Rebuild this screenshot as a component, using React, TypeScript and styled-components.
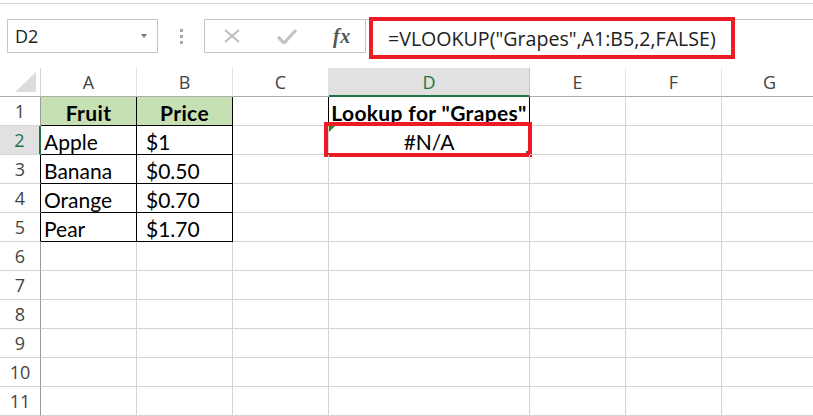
import React from "react";
import styled, { createGlobalStyle, css } from "styled-components";

const GlobalStyle = createGlobalStyle`
  html, body { margin: 0; padding: 0; background: #ffffff; }
  body { overflow: hidden; }
  * { box-sizing: border-box; }
`;

const UI_FONT = `"Open Sans", "Noto Sans", "DejaVu Sans", sans-serif`;
const CELL_FONT = `Lato, "Open Sans", "Liberation Sans", sans-serif`;
const GREEN = "#217346";
const GRID = "#d4d4d4";
const RED = "#ed1c24";

const Page = styled.div`
  width: 813px;
  height: 416px;
  overflow: hidden;
  background: #fff;
`;

const TopRule = styled.div`
  height: 4px;
  border-bottom: 1px solid ${GRID};
`;

const FormulaBar = styled.div`
  margin-top: 15px;
  height: 34px;
  display: flex;
  padding-left: 7px;
  font-family: ${UI_FONT};
`;

const NameBox = styled.div`
  width: 151px;
  height: 34px;
  border: 1px solid #c6c6c6;
  display: flex;
  align-items: center;
  justify-content: space-between;
  padding: 0 10px 0 7px;
  font-size: 18px;
  color: #222;
`;

const Caret = styled.span`
  width: 0;
  height: 0;
  border-left: 3.5px solid transparent;
  border-right: 3.5px solid transparent;
  border-top: 4px solid #777;
`;

const Grip = styled.div`
  width: 46px;
  display: flex;
  flex-direction: column;
  align-items: center;
  justify-content: center;
  gap: 3px;
`;

const GripDot = styled.span`
  width: 3px;
  height: 3px;
  background: #a6a6a6;
`;

const FxBox = styled.div`
  width: 162px;
  height: 34px;
  border: 1px solid #c6c6c6;
  display: flex;
  align-items: center;
  padding: 0 0 0 18px;
  gap: 36px;
`;

const FxLabel = styled.span`
  font-family: "Liberation Serif", "DejaVu Serif", serif;
  font-style: italic;
  font-weight: bold;
  font-size: 20px;
  color: #555;
  letter-spacing: 0.5px;
`;

const FormulaInput = styled.div`
  flex: 1;
  height: 34px;
  border-top: 1px solid #c6c6c6;
  display: flex;
  align-items: flex-start;
`;

const FormulaHighlight = styled.div`
  margin-top: -3px;
  margin-left: 3px;
  width: 366px;
  height: 42px;
  border: 4px solid ${RED};
  background: #fff;
  display: flex;
  align-items: center;
  padding-left: 15px;
  font-size: 19.6px;
  color: #222;
  white-space: nowrap;
`;

const Sheet = styled.div`
  margin-top: 15px;
  display: grid;
  grid-template-columns: 41px 96px 96px 96px 201px 96px 96px 96px;
  grid-template-rows: 29px;
  grid-auto-rows: 29px;
`;

const Corner = styled.div`
  border-right: 1px solid ${GRID};
  border-bottom: 1px solid #ababab;
  display: flex;
  align-items: flex-end;
  justify-content: flex-end;
  padding: 0 4px 4px 0;
`;

const ColHead = styled.div<{ $active?: boolean }>`
  font-family: ${UI_FONT};
  font-size: 18px;
  color: #444;
  display: flex;
  align-items: center;
  justify-content: center;
  border-right: 1px solid #e1e1e1;
  border-bottom: 1px solid #ababab;
  ${(p) =>
    p.$active &&
    css`
      background: #e1e1e1;
      color: ${GREEN};
      border-right-color: #c6c6c6;
      border-bottom: 2px solid ${GREEN};
      padding-top: 1px;
    `}
`;

const RowHead = styled.div<{ $edge?: "active" | "boxed" }>`
  font-family: ${UI_FONT};
  font-size: 18px;
  color: #444;
  display: flex;
  align-items: center;
  justify-content: center;
  border-bottom: 1px solid ${GRID};
  border-right: 1px solid #9b9b9b;
  ${(p) =>
    p.$edge === "boxed" &&
    css`
      border-right-color: #000;
    `}
  ${(p) =>
    p.$edge === "active" &&
    css`
      background: #e1e1e1;
      color: ${GREEN};
      border-right: 2px solid ${GREEN};
    `}
`;

const Cell = styled.div<{
  $boxRight?: boolean;
  $boxBottom?: boolean;
  $fill?: string;
  $bold?: boolean;
  $align?: "left" | "center";
  $pad?: number;
}>`
  position: relative;
  font-family: ${CELL_FONT};
  font-size: 21px;
  color: #000;
  display: flex;
  align-items: center;
  padding-top: 2px;
  white-space: nowrap;
  border-right: 1px solid ${(p) => (p.$boxRight ? "#000" : GRID)};
  border-bottom: 1px solid ${(p) => (p.$boxBottom ? "#000" : GRID)};
  justify-content: ${(p) => (p.$align === "center" ? "center" : "flex-start")};
  padding-left: ${(p) => (p.$align === "center" ? 0 : p.$pad ?? 3)}px;
  background: ${(p) => p.$fill ?? "transparent"};
  font-weight: ${(p) => (p.$bold ? 700 : 400)};
  letter-spacing: ${(p) => (p.$bold ? "0.35px" : "0")};
`;

const CellMark = styled.span`
  position: absolute;
  top: -4px;
  left: -5px;
  right: -3px;
  bottom: -3px;
  border: 4px solid ${RED};
  pointer-events: none;
`;

const ErrorFlag = styled.span`
  position: absolute;
  top: 0;
  left: 0;
  width: 0;
  height: 0;
  border-top: 6px solid #1e8a1e;
  border-right: 6px solid transparent;
`;

const FillHandle = styled.span`
  position: absolute;
  right: 1px;
  bottom: 1px;
  width: 2px;
  height: 2px;
  background: ${GREEN};
`;

type CellSpec = {
  text?: string;
  boxRight?: boolean;
  boxBottom?: boolean;
  fill?: string;
  bold?: boolean;
  align?: "left" | "center";
  pad?: number;
  marked?: boolean;
};

const HEADER_FILL = "#c6e0b4";
const fruits: [string, string][] = [
  ["Apple", "$1"],
  ["Banana", "$0.50"],
  ["Orange", "$0.70"],
  ["Pear", "$1.70"],
];

function buildRow(r: number): CellSpec[] {
  const row: CellSpec[] = Array.from({ length: 7 }, () => ({}));
  if (r === 1) {
    row[0] = { text: "Fruit", boxRight: true, boxBottom: true, fill: HEADER_FILL, bold: true, align: "center" };
    row[1] = { text: "Price", boxRight: true, boxBottom: true, fill: HEADER_FILL, bold: true, align: "center" };
    row[2] = { boxRight: true };
    row[3] = { text: 'Lookup for "Grapes"', boxRight: true, boxBottom: true, bold: true, align: "center" };
  } else if (r >= 2 && r <= 5) {
    const [f, p] = fruits[r - 2];
    row[0] = { text: f, boxRight: true, boxBottom: true };
    row[1] = { text: p, boxRight: true, boxBottom: true, pad: 9 };
    if (r === 2) {
      row[3] = { text: "#N/A", align: "center", marked: true };
    }
  }
  return row;
}

const XIcon = () => (
  <svg width="18" height="14" viewBox="0 0 18 14">
    <path d="M2 1 L16 13 M16 1 L2 13" stroke="#bdbdbd" strokeWidth="2" fill="none" />
  </svg>
);

const CheckIcon = () => (
  <svg width="20" height="15" viewBox="0 0 20 15">
    <path d="M1 8 L7 14 L19 1" stroke="#c4c4c4" strokeWidth="3.2" fill="none" />
  </svg>
);

const CornerTriangle = () => (
  <svg width="21" height="20" viewBox="0 0 21 20">
    <polygon points="21,0 21,20 0,20" fill="#dcdcdc" />
  </svg>
);

export default function App() {
  const cols = ["A", "B", "C", "D", "E", "F", "G"];
  const rows = Array.from({ length: 11 }, (_, i) => i + 1);
  return (
    <Page>
      <GlobalStyle />
      <TopRule />
      <FormulaBar>
        <NameBox>
          <span>D2</span>
          <Caret />
        </NameBox>
        <Grip>
          <GripDot />
          <GripDot />
          <GripDot />
        </Grip>
        <FxBox>
          <XIcon />
          <CheckIcon />
          <FxLabel>fx</FxLabel>
        </FxBox>
        <FormulaInput>
          <FormulaHighlight>=VLOOKUP("Grapes",A1:B5,2,FALSE)</FormulaHighlight>
        </FormulaInput>
      </FormulaBar>
      <Sheet>
        <Corner>
          <CornerTriangle />
        </Corner>
        {cols.map((c) => (
          <ColHead key={c} $active={c === "D"}>
            {c}
          </ColHead>
        ))}
        {rows.map((r) => (
          <React.Fragment key={r}>
            <RowHead $edge={r === 2 ? "active" : r >= 3 && r <= 5 ? "boxed" : undefined}>{r}</RowHead>
            {buildRow(r).map((c, i) => (
              <Cell
                key={i}
                $boxRight={c.boxRight}
                $boxBottom={c.boxBottom}
                $fill={c.fill}
                $bold={c.bold}
                $align={c.align}
                $pad={c.pad}
              >
                {c.text}
                {c.marked && (
                  <>
                    <ErrorFlag />
                    <FillHandle />
                    <CellMark />
                  </>
                )}
              </Cell>
            ))}
          </React.Fragment>
        ))}
      </Sheet>
    </Page>
  );
}
